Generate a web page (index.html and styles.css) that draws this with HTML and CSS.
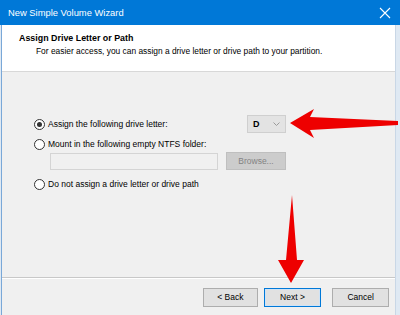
FILE: index.html
```html
<!DOCTYPE html>
<html>
<head>
<meta charset="utf-8">
<link rel="stylesheet" href="styles.css">
</head>
<body>
<div class="window">
  <div class="titlebar">
    <span class="title">New Simple Volume Wizard</span>
    <svg class="close" width="12" height="12" viewBox="0 0 12 12"><path d="M1 1 L11 11 M11 1 L1 11" stroke="#fff" stroke-width="1.1" fill="none"/></svg>
  </div>
  <div class="frame">
    <div class="header">
      <div class="h-title">Assign Drive Letter or Path</div>
      <div class="h-sub">For easier access, you can assign a drive letter or drive path to your partition.</div>
    </div>
    <div class="content">
      <div class="row row1">
        <span class="radio checked"></span>
        <span class="label">Assign the following drive letter:</span>
        <span class="select"><span>D</span><svg width="7" height="4" viewBox="0 0 7 4"><path d="M0.5 0.5 L3.5 3.5 L6.5 0.5" stroke="#9a9a9a" fill="none"/></svg></span>
      </div>
      <div class="row row2">
        <span class="radio"></span>
        <span class="label">Mount in the following empty NTFS folder:</span>
      </div>
      <div class="row3">
        <span class="input"></span>
        <span class="browse">Browse...</span>
      </div>
      <div class="row row4">
        <span class="radio"></span>
        <span class="label">Do not assign a drive letter or drive path</span>
      </div>
    </div>
    <div class="footer">
      <span class="btn">&lt; Back</span>
      <span class="btn next">Next &gt;</span>
      <span class="btn cancel">Cancel</span>
    </div>
  </div>
  <svg class="arrow arrow-h" width="110" height="32" viewBox="0 0 110 32"><polygon points="0,15 24,1 20,9 108,13 108,17 20,22 24,30" fill="#ee0000"/></svg>
  <svg class="arrow arrow-v" width="30" height="92" viewBox="0 0 30 92"><polygon points="15,0 20,65 27,65 14,88 1,65 9,65" fill="#ee0000"/></svg>
</div>
</body>
</html>
```

FILE: styles.css
```css
html, body {
  margin: 0;
  padding: 0;
  width: 400px;
  height: 315px;
  overflow: hidden;
  background: #dfe9f3;
}
.window {
  position: relative;
  width: 400px;
  height: 315px;
  display: flex;
  flex-direction: column;
  font-family: "Liberation Sans", Arial, sans-serif;
  font-size: 8.5px;
  color: #000;
}
.titlebar {
  height: 25px;
  background: #0078d7;
  display: flex;
  align-items: center;
  justify-content: space-between;
  padding: 0 8px 0 8px;
  flex: none;
}
.title {
  color: #fff;
  font-size: 9.4px;
}
.close {
  margin-right: 1px;
}
.frame {
  flex: 1;
  display: flex;
  flex-direction: column;
  margin: 0 4px 0 1px;
  border-left: 1px solid #7aa8d8;
  border-right: 1px solid #c9d7e6;
  background: #f0f0f0;
}
.header {
  height: 47px;
  background: #fff;
  border-bottom: 1px solid #d8d8d8;
  box-sizing: border-box;
  padding: 7px 0 0 17px;
  flex: none;
}
.h-title {
  font-weight: bold;
  font-size: 8.9px;
  line-height: 13px;
}
.h-sub {
  padding-left: 17px;
  line-height: 13px;
  font-size: 8.4px;
}
.content {
  flex: 1;
  padding: 44px 0 0 32px;
  border-bottom: 1px solid #c8c8c8;
  box-shadow: 0 1px 0 #fff;
}
.row {
  display: flex;
  align-items: center;
  height: 16px;
}
.radio {
  width: 11px;
  height: 11px;
  border: 1px solid #333;
  border-radius: 50%;
  box-sizing: border-box;
  background: #fff;
  margin-right: 3px;
  position: relative;
  flex: none;
}
.radio.checked::after {
  content: "";
  position: absolute;
  left: 2px;
  top: 2px;
  width: 5px;
  height: 5px;
  border-radius: 50%;
  background: #333;
}
.label {
  white-space: nowrap;
  font-size: 8.5px;
}
.select {
  margin-left: auto;
  margin-right: 109px;
  width: 39px;
  height: 18px;
  flex: none;
  box-sizing: border-box;
  background: #e3e3e3;
  border: 1px solid #cfcfcf;
  display: flex;
  align-items: center;
  justify-content: space-between;
  padding: 0 5px 0 5px;
  font-weight: bold;
  font-size: 9px;
}
.row2 {
  margin-top: 4px;
}
.row3 {
  display: flex;
  align-items: center;
  margin: 0 0 0 16px;
  height: 18px;
}
.input {
  width: 168px;
  height: 17px;
  box-sizing: border-box;
  border: 1px solid #d4d4d4;
  background: #f0f0f0;
}
.browse {
  margin-left: 8px;
  width: 60px;
  height: 18px;
  box-sizing: border-box;
  background: #cccccc;
  border: 1px solid #bfbfbf;
  color: #838383;
  display: flex;
  align-items: center;
  justify-content: center;
  font-size: 8.5px;
}
.row4 {
  margin-top: 6px;
}
.footer {
  height: 36px;
  flex: none;
  display: flex;
  align-items: center;
  padding: 0 0 0 201px;
  margin-top: 1px;
}
.btn {
  width: 56px;
  height: 19px;
  box-sizing: border-box;
  background: #e1e1e1;
  border: 1px solid #adadad;
  display: flex;
  align-items: center;
  justify-content: center;
  font-size: 8.5px;
  margin-right: 6px;
}
.btn.next {
  width: 59px;
  border: 1px solid #0078d7;
  box-shadow: inset 0 0 0 1px #cfe3f6;
  margin-right: 11px;
}
.btn.cancel {
  width: 58px;
}
.arrow {
  position: absolute;
}
.arrow-h {
  left: 290px;
  top: 108px;
}
.arrow-v {
  left: 277px;
  top: 195px;
}
```
